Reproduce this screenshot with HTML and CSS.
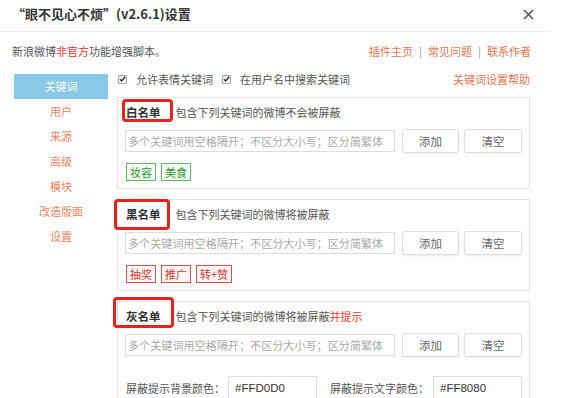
FILE: index.html
```html
<!DOCTYPE html>
<html lang="zh-CN">
<head>
<meta charset="utf-8">
<title>设置</title>
<link rel="stylesheet" href="styles.css">
</head>
<body>
<div class="dialog">
  <header class="titlebar">
    <h1 class="title">“眼不见心不烦”(v2.6.1)设置</h1>
    <span class="close"><svg width="11" height="11" viewBox="0 0 11 11"><path d="M1 1L10 10M10 1L1 10" stroke="#555" stroke-width="1.6"/></svg></span>
  </header>
  <div class="intro">
    <span>新浪微博<em class="hot">非官方</em>功能增强脚本。</span>
    <nav class="links"><a>插件主页</a><span class="sep">|</span><a>常见问题</a><span class="sep">|</span><a>联系作者</a></nav>
  </div>
  <div class="body">
    <aside class="tabs">
      <div class="tab active">关键词</div>
      <div class="tab">用户</div>
      <div class="tab">来源</div>
      <div class="tab">高级</div>
      <div class="tab">模块</div>
      <div class="tab">改造版面</div>
      <div class="tab">设置</div>
    </aside>
    <main class="content">
      <div class="opts">
        <label class="opt"><span class="cb"><svg width="8" height="8" viewBox="0 0 8 8"><path d="M1 4.2L3.1 6.3L7 1.5" fill="none" stroke="#333" stroke-width="1.6"/></svg></span>允许表情关键词</label>
        <label class="opt"><span class="cb"><svg width="8" height="8" viewBox="0 0 8 8"><path d="M1 4.2L3.1 6.3L7 1.5" fill="none" stroke="#333" stroke-width="1.6"/></svg></span>在用户名中搜索关键词</label>
        <a class="help">关键词设置帮助</a>
      </div>

      <section class="panel">
        <div class="head"><b class="name mark-a">白名单</b><span class="desc">包含下列关键词的微博不会被屏蔽</span></div>
        <div class="row">
          <input class="kw" type="text" placeholder="多个关键词用空格隔开；不区分大小写；区分简繁体">
          <button class="btn add">添加</button>
          <button class="btn clear">清空</button>
        </div>
        <div class="tags">
          <span class="tag green">妆容</span><span class="tag green">美食</span>
        </div>
      </section>

      <section class="panel">
        <div class="head"><b class="name mark-b">黑名单</b><span class="desc">包含下列关键词的微博将被屏蔽</span></div>
        <div class="row">
          <input class="kw" type="text" placeholder="多个关键词用空格隔开；不区分大小写；区分简繁体">
          <button class="btn add">添加</button>
          <button class="btn clear">清空</button>
        </div>
        <div class="tags">
          <span class="tag red">抽奖</span><span class="tag red">推广</span><span class="tag red">转+赞</span>
        </div>
      </section>

      <section class="panel">
        <div class="head"><b class="name mark-c">灰名单</b><span class="desc">包含下列关键词的微博将被屏蔽<em class="hot">并提示</em></span></div>
        <div class="row">
          <input class="kw" type="text" placeholder="多个关键词用空格隔开；不区分大小写；区分简繁体">
          <button class="btn add">添加</button>
          <button class="btn clear">清空</button>
        </div>
        <div class="colors">
          <span class="clabel">屏蔽提示背景颜色：</span><input class="color" type="text" value="#FFD0D0">
          <span class="clabel second">屏蔽提示文字颜色：</span><input class="color" type="text" value="#FF8080">
        </div>
      </section>
    </main>
  </div>
</div>
</body>
</html>
```

FILE: styles.css
```css
* { box-sizing: border-box; }
html, body { margin: 0; padding: 0; background: #fff; overflow: hidden; }
body {
  font-family: "Noto Sans CJK SC", "Noto Sans", sans-serif;
  font-size: 11px;
  color: #333;
  width: 568px;
  height: 398px;
}
.dialog { width: 568px; }

.titlebar {
  width: 551px;
  height: 32px;
  border-bottom: 1px solid #ececec;
  display: flex;
  align-items: flex-start;
  justify-content: space-between;
  padding: 6px 17px 0 12px;
}
.title {
  margin: 0;
  font-size: 13px;
  line-height: 16px;
  font-weight: bold;
  color: #333;
}
.close { display: block; margin-top: 3px; line-height: 0; }

.intro {
  display: flex;
  justify-content: space-between;
  align-items: flex-start;
  padding: 12px 37px 0 12px;
  height: 40px;
  line-height: 14px;
  color: #555;
}
.hot { font-style: normal; color: #e8352a; }
.links { display: flex; align-items: center; color: #e87551; }
.links a { color: #e87551; }
.sep { color: #999; margin: 0 6px; }

.body { display: flex; align-items: flex-start; }
.tabs {
  width: 94px;
  margin-left: 14px;
  margin-top: 2px;
  display: flex;
  flex-direction: column;
}
.tab {
  height: 25px;
  line-height: 25px;
  text-align: center;
  color: #e98560;
}
.tab.active { background: #89c8e9; color: #fff; }

.content { width: 413px; margin-left: 9px; }

.opts {
  display: flex;
  align-items: center;
  height: 14px;
  line-height: 14px;
  margin-bottom: 11px;
  padding-left: 1px;
  color: #555;
}
.opt { display: flex; align-items: center; margin-right: 9px; }
.cb {
  width: 9px; height: 9px;
  border: 1px solid #a8a8a8;
  background: #f3f3f3;
  border-radius: 1px;
  margin-right: 9px;
  display: flex; align-items: center; justify-content: center;
}
.cb svg { display: block; }
.help { margin-left: auto; color: #e87551; }

.panel {
  border: 1px solid #e2e2e2;
  padding: 4px 7px 7px 7px;
  margin-bottom: 10px;
}
.head { display: flex; align-items: center; height: 20px; line-height: 20px; }
.name {
  position: relative;
  font-size: 11.5px;
  font-weight: bold;
  color: #333;
  margin-left: 1px;
  margin-right: 15px;
}
.name::after {
  content: "";
  position: absolute;
  border: 3px solid #e3231c;
  border-radius: 4px;
}
.mark-a::after { left: -4px; right: -12px; top: -3px; bottom: 0; }
.mark-b::after { left: -12px; right: -9px; top: -5px; bottom: -6px; }
.mark-c::after { left: -13px; right: -13px; top: -9px; bottom: -2px; }
.desc { color: #555; }

.row { display: flex; align-items: center; margin-top: 7px; height: 24px; }
.kw {
  width: 270px;
  height: 22px;
  border: 1px solid #dcdcdc;
  padding: 0 2px;
  font-family: inherit;
  font-size: 11.1px;
  color: #333;
  outline: none;
}
.kw::placeholder { color: #aaa; }
.btn {
  height: 24px;
  background: #fff;
  border: 1px solid #dedede;
  border-radius: 3px;
  box-shadow: 0 1px 2px rgba(0,0,0,0.08);
  font-family: inherit;
  font-size: 11.5px;
  color: #666;
  padding: 0;
}
.add { width: 57px; margin-left: 7px; }
.clear { width: 58px; margin-left: 5px; }

.tags { display: flex; margin-top: 10px; height: 18px; padding-left: 1px; }
.tag {
  height: 18px;
  line-height: 16px;
  padding: 0 3px;
  border: 1px solid;
  margin-right: 5px;
  font-size: 11px;
}
.tag.green { color: #2f9a2f; border-color: #67b567; background: #f7fcf7; }
.tag.red { color: #d8342b; border-color: #d9534f; background: #fff7f7; }

.colors {
  display: flex;
  align-items: center;
  margin-top: 19px;
  height: 24px;
  padding-left: 1px;
}
.clabel { color: #555; width: 102px; }
.clabel.second { margin-left: 13px; width: 103px; }
.color {
  width: 89px;
  height: 24px;
  border: 1px solid #dcdcdc;
  padding: 0 6px;
  font-family: "Liberation Sans", Arial, sans-serif;
  font-size: 11.5px;
  color: #333;
  outline: none;
}
```
